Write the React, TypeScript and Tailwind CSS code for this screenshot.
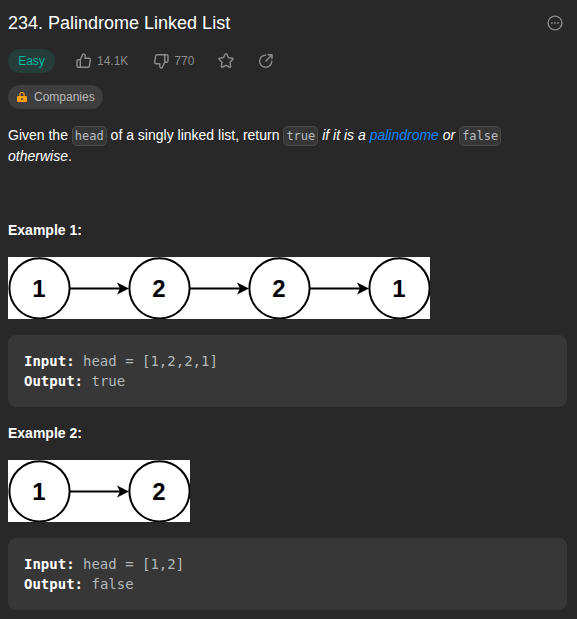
import type { ReactNode } from 'react';

function ThumbIcon({ down = false }: { down?: boolean }) {
  return (
    <svg
      className={down ? 'h-[18px] w-[18px] rotate-180' : 'h-[18px] w-[18px]'}
      viewBox="0 0 18 18"
      fill="none"
      stroke="currentColor"
      strokeWidth="1.4"
      strokeLinejoin="round"
    >
      <path d="M5.3 7.7 7.9 2.1C9.2 1.8 10.2 2.6 10.2 3.8V6.3H13.9C14.9 6.3 15.4 6.9 15.3 7.8L14.4 13.9C14.3 14.7 13.8 15.2 13 15.2H3.4C2.5 15.2 2 14.7 2 13.8V9.1C2 8.2 2.5 7.7 3.4 7.7H5.3V15.2" />
    </svg>
  );
}

function StarIcon() {
  return (
    <svg className="h-[18px] w-[18px]" viewBox="0 0 18 18" fill="none" stroke="currentColor" strokeWidth="1.4" strokeLinejoin="round">
      <path d="M8.2 2.2Q9 1 9.8 2.2L11.5 5.6 15.3 6.2Q16.6 6.5 15.7 7.5L13 10.3 13.6 14.2Q13.7 15.6 12.4 15L9 13.3 5.6 15Q4.3 15.6 4.4 14.2L5 10.3 2.3 7.5Q1.4 6.5 2.7 6.2L6.5 5.6Z" />
    </svg>
  );
}

function ShareIcon() {
  return (
    <svg className="h-[18px] w-[18px]" viewBox="0 0 18 18" fill="none" stroke="currentColor" strokeWidth="1.4" strokeLinecap="round" strokeLinejoin="round">
      <path d="M8.8 3.1A6.1 6.1 0 1 0 14.8 9.2M11.2 2.8H15V6.6M14.8 3 8.9 8.9" />
    </svg>
  );
}

function MoreIcon() {
  return (
    <svg className="h-[18px] w-[18px]" viewBox="0 0 18 18" fill="none">
      <circle cx="9" cy="9" r="6.9" stroke="currentColor" strokeWidth="1.4" />
      <path d="M5.1 8.2h1.6v1.6H5.1zM8.2 8.2h1.6v1.6H8.2zM11.3 8.2h1.6v1.6h-1.6z" fill="currentColor" />
    </svg>
  );
}

function LockIcon() {
  return (
    <svg className="h-3 w-3" viewBox="0 0 12 12" fill="none">
      <path d="M3.9 5.4V3.6a2.1 2.1 0 0 1 4.2 0V5.4" stroke="#ffa116" strokeWidth="1.1" />
      <path fillRule="evenodd" d="M2.3 5.1h7.4q1.3 0 1.3 1.3v3.4q0 1.3-1.3 1.3H2.3Q1 11.1 1 9.8V6.4q0-1.3 1.3-1.3ZM5.2 7.2v1.7h1.6V7.2Z" fill="#ffa116" />
    </svg>
  );
}

function InlineCode({ children }: { children: ReactNode }) {
  return (
    <code className="rounded-[5px] border border-[#494949] bg-[#363636] px-[2px] py-[2px] font-['DejaVu_Sans_Mono',monospace] text-[12px] leading-none whitespace-nowrap text-[#b7bbbf]">
      {children}
    </code>
  );
}

function LinkedListDiagram({ values }: { values: number[] }) {
  const width = (values.length - 1) * 120 + 62;
  return (
    <svg className="block h-[62px] bg-white" width={width} height="62" viewBox={`0 0 ${width} 62`}>
      {values.map((value, i) => (
        <g key={i} transform={`translate(${i * 120} 0)`}>
          <circle cx="31.5" cy="31.3" r="30.1" fill="white" stroke="black" strokeWidth="2" />
          <text x="31" y="40" textAnchor="middle" className="font-['Liberation_Sans',sans-serif] text-[24px] font-bold">
            {value}
          </text>
          {i < values.length - 1 && (
            <>
              <path d="M62 31.5H113" stroke="black" strokeWidth="2" />
              <path d="M121 31.5 109 25.5 112 31.5 109 37.5Z" />
            </>
          )}
        </g>
      ))}
    </svg>
  );
}

function Example({ index, values, output }: { index: number; values: number[]; output: string }) {
  return (
    <section>
      <h2 className="mb-4 text-[14px] leading-[21px] font-bold text-white">Example {index}:</h2>
      <LinkedListDiagram values={values} />
      <pre className="my-4 h-[72px] rounded-lg bg-[#373737] p-4 font-['DejaVu_Sans_Mono',monospace] text-[14px] leading-5 text-[#b3b7ba]">
        <strong className="text-white">Input:</strong> head = [{values.join(',')}]{'\n'}
        <strong className="text-white">Output:</strong> {output}
      </pre>
    </section>
  );
}

export default function App() {
  return (
    <main className="h-[619px] w-full overflow-hidden bg-[#282828] pr-[10px] pl-2 font-['Liberation_Sans',sans-serif] text-white">
      <header className="flex h-[49px] items-center justify-between pb-[3px]">
        <h1 className="text-[18px] leading-6">234. Palindrome Linked List</h1>
        <span className="pr-[3px] text-[#8b8b8b]"><MoreIcon /></span>
      </header>
      <div className="flex h-6 items-center text-[12px] leading-4 text-[#8c8c8c]">
        <span className="flex h-6 w-[47px] items-center justify-center rounded-full bg-[#243d39] text-[#00b8a3]">Easy</span>
        <span className="ml-5 flex items-center gap-1"><ThumbIcon />14.1K</span>
        <span className="ml-6 flex items-center gap-1"><ThumbIcon down />770</span>
        <span className="ml-[23px]"><StarIcon /></span>
        <span className="ml-[22px]"><ShareIcon /></span>
      </div>
      <div className="mt-3 flex h-6 w-[95px] items-center gap-[6px] rounded-full bg-[#3e3e3e] pl-2 text-[12px] text-[#b8b8b8]">
        <LockIcon />Companies
      </div>
      <p className="mt-4 mb-[53px] h-[42px] text-[14px] leading-[21px]">
        Given the <InlineCode>head</InlineCode> of a singly linked list, return <InlineCode>true</InlineCode>{' '}
        <em>if it is a <span className="text-[#0a84ff]">palindrome</span> or </em>
        <InlineCode>false</InlineCode> <em>otherwise</em>.
      </p>
      <Example index={1} values={[1, 2, 2, 1]} output="true" />
      <Example index={2} values={[1, 2]} output="false" />
    </main>
  );
}
